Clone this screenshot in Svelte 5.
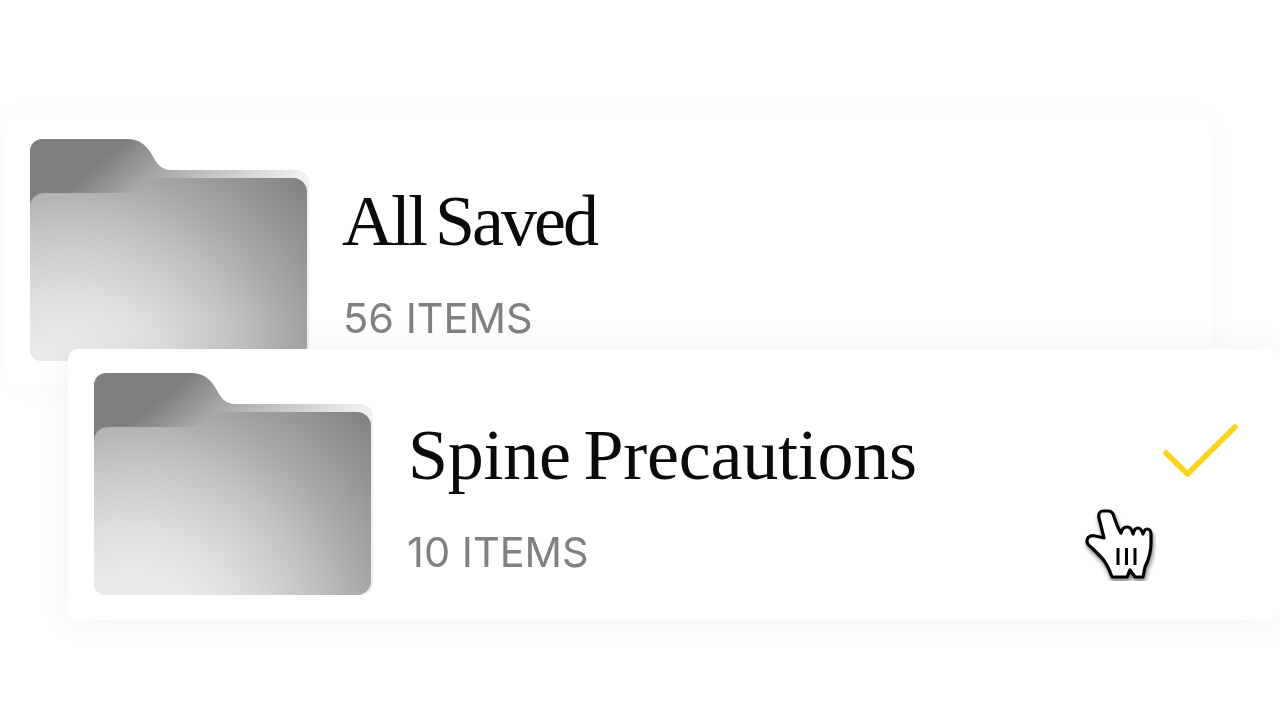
<script>
  const folders = [
    { name: 'All Saved', count: '56 ITEMS' },
    { name: 'Spine Precautions', count: '10 ITEMS', selected: true }
  ];
</script>

<div class="stage">
  {#each folders as folder, i}
    <div class="card" class:selected={folder.selected}>
      <svg class="folder" width="279" height="222" viewBox="0 0 279 222" aria-hidden="true">
        <defs>
          <linearGradient id="back-{i}" gradientUnits="userSpaceOnUse" x1="33" y1="54" x2="120" y2="159">
            <stop offset="0" stop-color="#7f7f7f" />
            <stop offset="0.3" stop-color="#a5a5a5" />
            <stop offset="1" stop-color="#efefef" />
          </linearGradient>
          <radialGradient id="front-{i}" gradientUnits="userSpaceOnUse" cx="40" cy="270" r="330">
            <stop offset="0.2" stop-color="#ebebeb" />
            <stop offset="0.35" stop-color="#dedede" />
            <stop offset="0.55" stop-color="#c4c4c4" />
            <stop offset="0.72" stop-color="#a8a8a8" />
            <stop offset="1" stop-color="#808080" />
          </radialGradient>
        </defs>
        <path
          d="M0 12a12 12 0 0 1 12-12h85c12 0 19 6 24 14c5 9 9 17 20 17h126a12 12 0 0 1 12 12v167a12 12 0 0 1-12 12H12a12 12 0 0 1-12-12z"
          fill="url(#back-{i})"
        />
        <path
          d="M0 68a14 14 0 0 1 14-14H88c14 0 20-4 28-9c5-4 9-6 16-6h131a14 14 0 0 1 14 14v155a14 14 0 0 1-14 14H14a14 14 0 0 1-14-14z"
          fill="url(#front-{i})"
        />
      </svg>
      <div class="text">
        <h2>{folder.name}</h2>
        <p>{folder.count}</p>
      </div>
      {#if folder.selected}
        <svg class="check" width="80" height="60" viewBox="0 0 80 60" aria-hidden="true">
          <path d="M4 31L25.500 52L73 5" fill="none" stroke="#ffd31a" stroke-width="5.500" stroke-linecap="round" stroke-linejoin="round" />
        </svg>
        <svg class="cursor" width="76" height="76" viewBox="0 0 76 76" aria-hidden="true">
          <path
            class="hand"
            d="M23 6c-3 0-5 3-4 7l5 20l-9-2c-4-1-8 1-8 5c0 3 2 5 5 7l9 9c4 4 7 9 11 20h15l3-7l5 7h8l2-10c3-6 6-14 6-24v-9c0-3-2-5-4-5c-2 0-3 2-4 5c-1-3-3-6-5-6c-3 0-4 2-5 6c-1-5-3-7-6-7c-3 0-5 2-6 6c-2-3-3-5-4-8l-4-11c-1-2-3-3-5-3z"
            fill="#fff"
            stroke="#000"
            stroke-width="3.200"
            stroke-linejoin="round"
          />
          <path d="M38 43v17M46.500 43v17M55 43v17" stroke="#000" stroke-width="3" />
        </svg>
      {/if}
    </div>
  {/each}
</div>

<style>
  :global(body) {
    background: #fff;
  }

  .stage {
    width: 1280px;
    height: 720px;
    padding: 115px 0 0 5px;
    box-sizing: border-box;
    background: #fff;
    overflow: hidden;
    display: flex;
    flex-direction: column;
  }

  .card {
    position: relative;
    width: 1206px;
    height: 270px;
    flex: none;
    padding: 24px 25px 0;
    box-sizing: border-box;
    display: flex;
    gap: 34px;
    background: #fff;
    border-radius: 10px;
    box-shadow: 0 0 40px rgba(0, 0, 0, 0.025);
  }

  .card.selected {
    width: 1212px;
    height: 271px;
    margin: -36px 0 0 63px;
    padding-left: 26px;
    box-shadow: 0 0 40px rgba(0, 0, 0, 0.055);
  }

  .folder {
    flex: none;
  }

  .text {
    display: flex;
    flex-direction: column;
    will-change: opacity;
  }

  h2 {
    margin: 37px 0 0 -1px;
    font: 400 72px/90px "Liberation Serif", serif;
    letter-spacing: -3px;
    word-spacing: -5px;
    color: #0a0a0a;
    white-space: nowrap;
  }

  .selected h2 {
    margin-left: 1px;
    letter-spacing: -0.250px;
    word-spacing: -5px;
  }

  p {
    margin: 27px 0 0;
    font: 400 41.500px/50px Inter, sans-serif;
    color: #808080;
    white-space: nowrap;
  }

  .check {
    position: absolute;
    left: 1094px;
    top: 73px;
  }

  .cursor {
    position: absolute;
    left: 1012px;
    top: 156px;
  }

  .hand {
    filter: drop-shadow(1px 3px 2px rgba(0, 0, 0, 0.5));
  }
</style>
